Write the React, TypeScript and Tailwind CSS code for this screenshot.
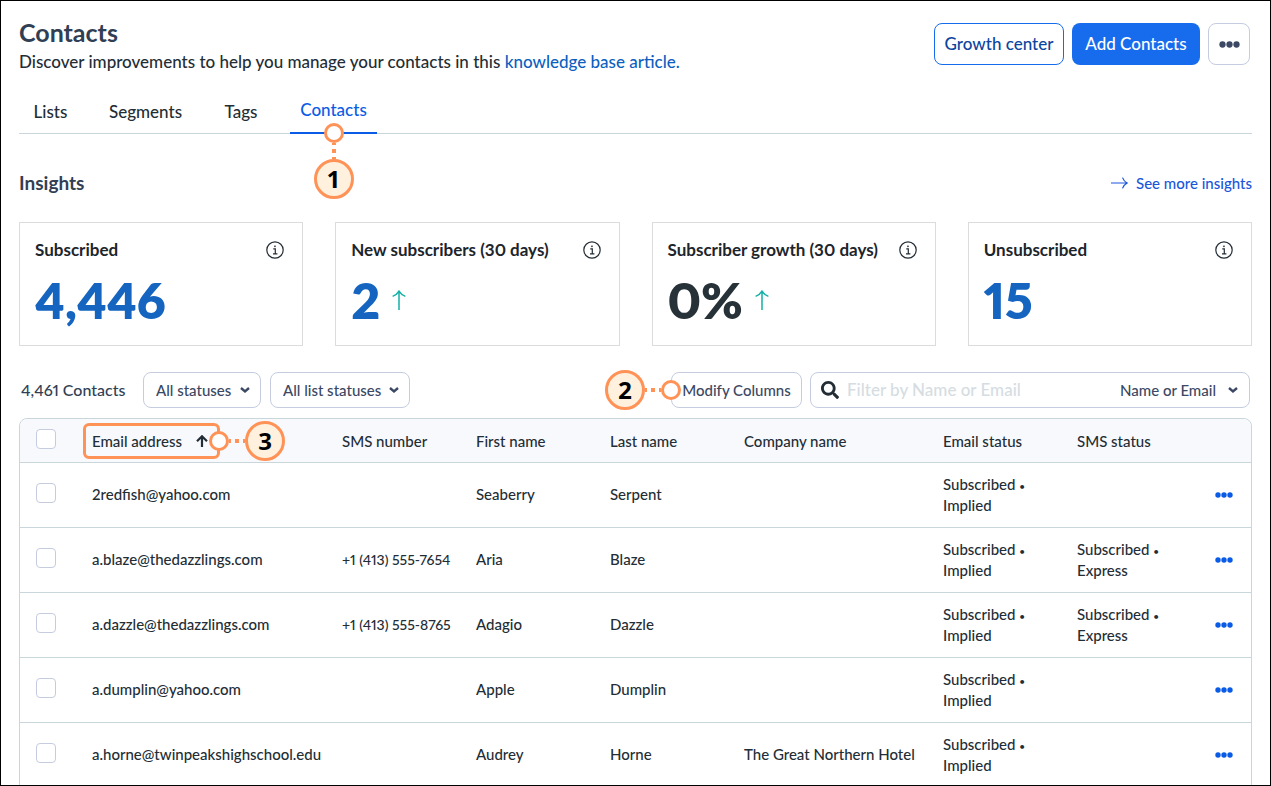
import type { ReactNode } from "react";
import { FaSearch } from "react-icons/fa";

const tabs = [
  { label: "Lists", width: "w-[53px]" },
  { label: "Segments", width: "w-[93px]" },
  { label: "Tags", width: "w-[54px]" },
  { label: "Contacts", width: "w-[87px]", active: true },
];

const stats = [
  { label: "Subscribed", value: "4,446" },
  { label: "New subscribers (30 days)", value: "2", up: true },
  { label: "Subscriber growth (30 days)", value: "0%", up: true, plain: true },
  { label: "Unsubscribed", value: "15" },
];

const contacts = [
  { email: "2redfish@yahoo.com", sms: "", first: "Seaberry", last: "Serpent", company: "", smsStatus: "" },
  { email: "a.blaze@thedazzlings.com", sms: "+1 (413) 555-7654", first: "Aria", last: "Blaze", company: "", smsStatus: "Express" },
  { email: "a.dazzle@thedazzlings.com", sms: "+1 (413) 555-8765", first: "Adagio", last: "Dazzle", company: "", smsStatus: "Express" },
  { email: "a.dumplin@yahoo.com", sms: "", first: "Apple", last: "Dumplin", company: "", smsStatus: "" },
  { email: "a.horne@twinpeakshighschool.edu", sms: "", first: "Audrey", last: "Horne", company: "The Great Northern Hotel", smsStatus: "" },
];

function Dots({ className }: { className: string }) {
  return (
    <svg viewBox="0 0 18 6" className={className} fill="currentColor" aria-hidden="true">
      <circle cx="3" cy="3" r="2.7" />
      <circle cx="9" cy="3" r="2.7" />
      <circle cx="15" cy="3" r="2.7" />
    </svg>
  );
}

function Chevron() {
  return (
    <svg viewBox="0 0 10 6" className="pointer-events-none absolute right-[11px] h-1.5 w-2.5" fill="none" stroke="currentColor" strokeWidth="2.4" aria-hidden="true">
      <path d="M1 1 5 4.4 9 1" />
    </svg>
  );
}

function InfoIcon() {
  return (
    <svg viewBox="0 0 18 18" className="size-[18px]" fill="none" stroke="currentColor" strokeWidth="1.2" aria-hidden="true">
      <circle cx="9" cy="9" r="8.2" />
      <path d="M7.3 7.8h2v5M7 12.8h4.4" />
      <rect x="8.2" y="4.6" width="1.5" height="1.5" fill="currentColor" stroke="none" />
    </svg>
  );
}

function ThinUpArrow() {
  return (
    <svg viewBox="0 0 14 20" className="h-5 w-3.5 text-[#13b0a5]" fill="none" stroke="currentColor" strokeWidth="1.5" aria-hidden="true">
      <path d="M7 20V1.2M.6 6.4C3.4 5.4 5.6 3.6 7 1.2c1.4 2.4 3.6 4.2 6.4 5.2" />
    </svg>
  );
}

function Callout({ children, direction, className }: { children: ReactNode; direction: "down" | "left" | "right"; className: string }) {
  const flow = direction === "down" ? "flex-col" : direction === "left" ? "flex-row-reverse" : "flex-row";
  const vertical = direction === "down";
  return (
    <div className={`pointer-events-none absolute z-10 flex items-center ${flow} ${className}`}>
      <span className="size-5 shrink-0 rounded-full border-3 border-[#ff9257] bg-white" />
      <svg className={vertical ? "h-4 w-1 shrink-0" : "h-1 w-4 shrink-0"} stroke="#ff9257" strokeWidth="4" strokeDasharray="4 4" strokeDashoffset="2" aria-hidden="true">
        {vertical ? <path d="M2 0v16" /> : <path d="M0 2h16" />}
      </svg>
      <span className="flex size-10 shrink-0 items-center justify-center rounded-full border-3 border-[#ff9257] bg-[#fff1de] font-[family-name:Open_Sans,sans-serif] text-2xl font-bold text-black">
        {children}
      </span>
    </div>
  );
}

function FilterSelect({ label, text, className }: { label: string; text: string; className: string }) {
  return (
    <div className={`relative flex h-9 items-center text-[#3b4863] ${className}`}>
      <select aria-label={label} className="h-full w-full appearance-none rounded-lg border border-[#c5cce0] bg-white pl-3 text-[15px] font-medium">
        <option>{text}</option>
      </select>
      <Chevron />
    </div>
  );
}

function Checkbox({ label }: { label: string }) {
  return (
    <input
      type="checkbox"
      aria-label={label}
      className="block size-5 appearance-none rounded border border-[#c5cce0] bg-white checked:bg-[#176bed]"
    />
  );
}

function Status({ detail }: { detail: string }) {
  return (
    <>
      Subscribed <span className="text-[10px] leading-none">•</span>
      <br />
      {detail}
    </>
  );
}

export default function App() {
  return (
    <main className="h-screen overflow-hidden border border-black bg-white px-[18px] font-[Lato,sans-serif] font-medium text-[#232d35] proportional-nums">
      <header className="flex items-start justify-between pt-[15px]">
        <div>
          <h1 className="text-[25px] leading-8 font-bold text-[#313f54]">Contacts</h1>
          <p className="text-[17px] leading-7">
            Discover improvements to help you manage your contacts in this{" "}
            <a href="#" className="text-[#0b5fc0]">knowledge base article.</a>
          </p>
        </div>
        <div className="flex gap-2 pt-[7px] pr-0.5">
          <button className="h-[42px] w-[130px] rounded-lg border border-[#176bed] text-[17px] text-[#0b459f]">Growth center</button>
          <button className="h-[42px] w-32 rounded-lg bg-[#176bed] text-[17px] text-white">Add Contacts</button>
          <button aria-label="More actions" className="flex h-[42px] w-[42px] items-center justify-center rounded-lg border border-[#c5cce0] text-[#3b4863]">
            <Dots className="h-[7px] w-[21px]" />
          </button>
        </div>
      </header>

      <nav className="mt-4 flex h-[42px] gap-[22px] border-b border-[#c9d6dc] pl-[5px]">
        {tabs.map((tab) => (
          <a
            key={tab.label}
            href="#"
            className={`relative flex items-center justify-center text-[17px] ${tab.width} ${
              tab.active ? "-mb-px border-b-2 border-[#0a5ce6] pb-1 text-[#0a5ce6]" : "pb-0.5"
            }`}
          >
            {tab.label}
            {tab.active && (
              <Callout direction="down" className="top-[31px] left-6">1</Callout>
            )}
          </a>
        ))}
      </nav>

      <section>
        <div className="flex items-center justify-between pt-[35px] pb-[25px]">
          <h2 className="text-[19px] leading-7 font-bold text-[#313f54]">Insights</h2>
          <a href="#" className="flex items-center gap-2 text-[15px] text-[#1a56db]">
            <svg viewBox="0 0 17 12" className="h-3 w-[17px]" fill="none" stroke="currentColor" strokeWidth="1.2" aria-hidden="true">
              <path d="M0 6h16.2M11.5.6C12.4 3 14 5 16.2 6c-2.2 1-3.8 3-4.7 5.4" />
            </svg>
            See more insights
          </a>
        </div>
        <div className="grid grid-cols-4 gap-8">
          {stats.map((stat) => (
            <div key={stat.label} className="h-[124px] border border-[#dcdcdc] px-[15px] pt-[15px]">
              <div className="flex items-center justify-between pr-[3px]">
                <h3 className="text-[17px] leading-6 font-bold text-[#1d252c]">{stat.label}</h3>
                <InfoIcon />
              </div>
              <div className="mt-3 flex items-center gap-3">
                <span className={`text-[50px] leading-[52px] font-extrabold ${stat.plain ? "text-[#263238]" : "text-[#1565c0]"}`}>
                  {stat.value}
                </span>
                {stat.up && <ThinUpArrow />}
              </div>
            </div>
          ))}
        </div>
      </section>

      <div className="mt-[26px] flex items-center pr-0.5">
        <span className="w-[124px] pl-0.5 text-base text-[#313f54]">4,461 Contacts</span>
        <FilterSelect label="Status" text="All statuses" className="w-[118px]" />
        <FilterSelect label="List status" text="All list statuses" className="ml-[9px] w-[140px]" />
        <div className="relative ml-auto">
          <button className="h-9 w-[131px] rounded-lg border border-[#c5cce0] text-[15px] text-[#3b4863]">Modify Columns</button>
          <Callout direction="left" className="top-[-2px] right-[121px]">2</Callout>
        </div>
        <div className="ml-2 flex h-9 w-[440px] items-center rounded-lg border border-[#c5cce0] pl-2.5">
          <FaSearch className="size-[18px]" aria-hidden="true" />
          <input
            type="text"
            aria-label="Filter by Name or Email"
            placeholder="Filter by Name or Email"
            className="ml-2 min-w-0 flex-1 text-[17px] outline-none placeholder:text-[#d5dde2]"
          />
          <div className="relative flex w-[139px] items-center text-[#3b4863]">
            <select aria-label="Filter field" className="w-full appearance-none bg-transparent pl-2.5 text-[15px] font-medium">
              <option>Name or Email</option>
            </select>
            <Chevron />
          </div>
        </div>
      </div>

      <div className="mt-2.5 rounded-t-lg border border-[#c9d6dc]">
        <table className="w-full table-fixed text-left text-[15px] leading-[21px]">
          <colgroup>
            <col className="w-14" />
            <col className="w-[250px]" />
            <col className="w-[134px]" />
            <col className="w-[134px]" />
            <col className="w-[134px]" />
            <col />
            <col className="w-[134px]" />
            <col className="w-[134px]" />
            <col className="w-14" />
          </colgroup>
          <thead>
            <tr className="h-[43px] border-b border-[#c9d6dc] *:bg-[#f7f9fd] *:px-4 *:pt-0.5 *:font-medium">
              <th className="rounded-tl-lg pb-1">
                <Checkbox label="Select all contacts" />
              </th>
              <th>
                <div className="relative -mx-[9px] flex h-9 w-[137px] items-center justify-between rounded-md border-3 border-[#ff9257] pr-[9px] pl-1.5">
                  Email address
                  <svg viewBox="0 0 12 12" className="size-3" fill="none" stroke="currentColor" strokeWidth="2.2" aria-hidden="true">
                    <path d="M6 12V1.5M1 6.3l5-5 5 5" />
                  </svg>
                  <Callout direction="right" className="-top-[5px] left-[123px]">3</Callout>
                </div>
              </th>
              <th>SMS number</th>
              <th>First name</th>
              <th>Last name</th>
              <th>Company name</th>
              <th>Email status</th>
              <th>SMS status</th>
              <th className="rounded-tr-lg" aria-label="Actions" />
            </tr>
          </thead>
          <tbody>
            {contacts.map((contact) => (
              <tr key={contact.email} className="h-[65px] border-b border-[#c9d6dc] *:px-4">
                <td className="pb-1">
                  <Checkbox label={`Select ${contact.email}`} />
                </td>
                <td className="whitespace-nowrap">{contact.email}</td>
                <td className="text-sm whitespace-nowrap">{contact.sms}</td>
                <td>{contact.first}</td>
                <td>{contact.last}</td>
                <td className="whitespace-nowrap">{contact.company}</td>
                <td>
                  <Status detail="Implied" />
                </td>
                <td>{contact.smsStatus && <Status detail={contact.smsStatus} />}</td>
                <td>
                  <button aria-label={`Actions for ${contact.email}`} className="ml-1 block text-[#0a5ce6]">
                    <Dots className="h-1.5 w-[18px]" />
                  </button>
                </td>
              </tr>
            ))}
          </tbody>
        </table>
      </div>
    </main>
  );
}
